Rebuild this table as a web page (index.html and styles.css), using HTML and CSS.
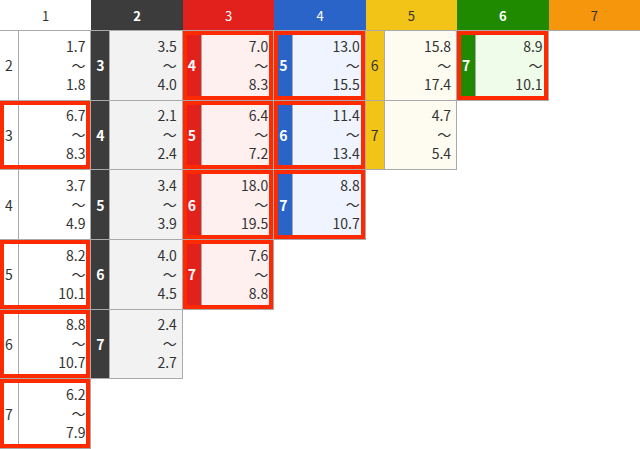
FILE: index.html
```html
<!DOCTYPE html>
<html lang="ja">
<head>
    <meta charset="UTF-8">
    <title>オッズ表</title>
    <link rel="stylesheet" href="styles.css">
</head>
<body>
<div class="board">
    <div class="head c1">1</div>
    <div class="head c2">2</div>
    <div class="head c3">3</div>
    <div class="head c4">4</div>
    <div class="head c5">5</div>
    <div class="head c6">6</div>
    <div class="head c7">7</div>

    <div class="pair c1"><span class="lbl">2</span><span class="val">1.7<i>～</i>1.8</span></div>
    <div class="pair c2"><span class="lbl">3</span><span class="val">3.5<i>～</i>4.0</span></div>
    <div class="pair c3 hit"><span class="lbl">4</span><span class="val">7.0<i>～</i>8.3</span></div>
    <div class="pair c4 hit"><span class="lbl">5</span><span class="val">13.0<i>～</i>15.5</span></div>
    <div class="pair c5"><span class="lbl">6</span><span class="val">15.8<i>～</i>17.4</span></div>
    <div class="pair c6 hit"><span class="lbl">7</span><span class="val">8.9<i>～</i>10.1</span></div>
    <div class="blank"></div>

    <div class="pair c1 hit"><span class="lbl">3</span><span class="val">6.7<i>～</i>8.3</span></div>
    <div class="pair c2"><span class="lbl">4</span><span class="val">2.1<i>～</i>2.4</span></div>
    <div class="pair c3 hit"><span class="lbl">5</span><span class="val">6.4<i>～</i>7.2</span></div>
    <div class="pair c4 hit"><span class="lbl">6</span><span class="val">11.4<i>～</i>13.4</span></div>
    <div class="pair c5"><span class="lbl">7</span><span class="val">4.7<i>～</i>5.4</span></div>
    <div class="blank"></div>
    <div class="blank"></div>

    <div class="pair c1"><span class="lbl">4</span><span class="val">3.7<i>～</i>4.9</span></div>
    <div class="pair c2"><span class="lbl">5</span><span class="val">3.4<i>～</i>3.9</span></div>
    <div class="pair c3 hit"><span class="lbl">6</span><span class="val">18.0<i>～</i>19.5</span></div>
    <div class="pair c4 hit"><span class="lbl">7</span><span class="val">8.8<i>～</i>10.7</span></div>
    <div class="blank"></div>
    <div class="blank"></div>
    <div class="blank"></div>

    <div class="pair c1 hit"><span class="lbl">5</span><span class="val">8.2<i>～</i>10.1</span></div>
    <div class="pair c2"><span class="lbl">6</span><span class="val">4.0<i>～</i>4.5</span></div>
    <div class="pair c3 hit"><span class="lbl">7</span><span class="val">7.6<i>～</i>8.8</span></div>
    <div class="blank"></div>
    <div class="blank"></div>
    <div class="blank"></div>
    <div class="blank"></div>

    <div class="pair c1 hit"><span class="lbl">6</span><span class="val">8.8<i>～</i>10.7</span></div>
    <div class="pair c2"><span class="lbl">7</span><span class="val">2.4<i>～</i>2.7</span></div>
    <div class="blank"></div>
    <div class="blank"></div>
    <div class="blank"></div>
    <div class="blank"></div>
    <div class="blank"></div>

    <div class="pair c1 hit"><span class="lbl">7</span><span class="val">6.2<i>～</i>7.9</span></div>
</div>
</body>
</html>
```

FILE: styles.css
```css
* {
    margin: 0;
    padding: 0;
    box-sizing: border-box;
    font-family: "Noto Sans CJK JP", "Noto Sans", sans-serif;
}

body {
    background: #fff;
    color: #333;
}

.board {
    width: 640px;
    height: 449px;
    display: grid;
    grid-template-columns: repeat(7, 1fr);
    grid-template-rows: 31px repeat(6, 1fr);
}

.head {
    display: flex;
    justify-content: center;
    align-items: center;
    font-size: 13px;
    border-bottom: 1px solid #aaa;
}

.head.c1 { background: #fff; color: #333; }
.head.c2 { background: #3c3c3c; color: #fff; font-weight: 700; }
.head.c3 { background: #e2211c; color: #fff; }
.head.c4 { background: #2a64c8; color: #fff; }
.head.c5 { background: #f2c418; color: #333; }
.head.c6 { background: #1f8a00; color: #fff; font-weight: 700; }
.head.c7 { background: #f5960c; color: #333; }

.pair {
    position: relative;
    display: flex;
    border-right: 1px solid #aaa;
    border-bottom: 1px solid #aaa;
}

.pair .lbl {
    width: 19px;
    flex: none;
    display: flex;
    justify-content: center;
    align-items: center;
    font-size: 14px;
    font-weight: 700;
    color: #fff;
    border-right: 1px solid #aaa;
}

.pair .val {
    flex: 1;
    display: flex;
    flex-direction: column;
    justify-content: center;
    align-items: flex-end;
    padding-right: 5px;
    font-size: 14px;
    line-height: 19px;
    color: #333;
}

.pair .val i {
    font-style: normal;
}

.pair.c1 .lbl { background: #fff; color: #333; font-weight: 400; }
.pair.c1 .val { background: #fff; }
.pair.c2 .lbl { background: #3c3c3c; }
.pair.c2 .val { background: #f2f2f2; }
.pair.c3 .lbl { background: #e2211c; }
.pair.c3 .val { background: #fff0f0; }
.pair.c4 .lbl { background: #2a64c8; }
.pair.c4 .val { background: #f0f4fe; }
.pair.c5 .lbl { background: #f2c418; color: #333; font-weight: 400; }
.pair.c5 .val { background: #fefcf1; }
.pair.c6 .lbl { background: #1f8a00; }
.pair.c6 .val { background: #f0fcea; }

.pair.hit::after {
    content: '';
    position: absolute;
    inset: 0;
    border: 4px solid #ff2a00;
    pointer-events: none;
}
```
